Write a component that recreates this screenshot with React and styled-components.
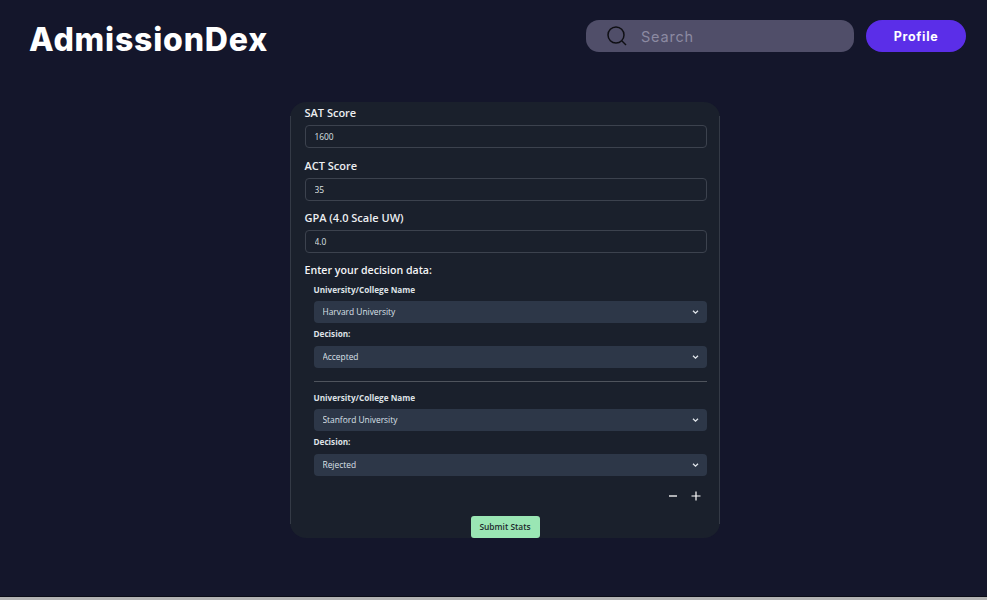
import React from "react";
import styled, { createGlobalStyle } from "styled-components";

const Global = createGlobalStyle`
  html, body { margin: 0; padding: 0; background: #14162b; }
  * { box-sizing: border-box; }
  #root { height: 600px; overflow: hidden; }
`;

const Page = styled.div`
  height: 600px;
  background: #14162b;
  border-bottom: 3px solid #b4b4b4;
  box-shadow: inset 0 -1px 0 #0b0c18;
  display: flex;
  flex-direction: column;
  font-family: "Open Sans", "Noto Sans", sans-serif;
`;

const Header = styled.header`
  display: flex;
  align-items: flex-start;
  justify-content: space-between;
  height: 72px;
  padding: 20px 21px 0 29px;
  flex: none;
`;

const Title = styled.h1`
  margin: 0;
  font-family: Inter, sans-serif;
  font-weight: 800;
  font-size: 32px;
  letter-spacing: 0.8px;
  color: #fff;
  line-height: 40px;
`;

const Actions = styled.div`
  display: flex;
  align-items: center;
  gap: 12px;
`;

const SearchBox = styled.div`
  width: 268px;
  height: 32px;
  border-radius: 13px;
  background: #504e69;
  display: flex;
  align-items: center;
  padding-left: 21px;
  gap: 14px;
`;

const SearchInput = styled.input`
  flex: 1;
  min-width: 0;
  border: 0;
  outline: 0;
  padding: 0;
  background: transparent;
  font-family: Inter, sans-serif;
  font-size: 14.5px;
  letter-spacing: 0.8px;
  color: #8c8aa2;
  &::placeholder { color: #8c8aa2; opacity: 1; }
`;

const ProfileButton = styled.button`
  width: 100px;
  height: 32px;
  border: 0;
  border-radius: 16px;
  background: #5b2ee8;
  color: #fff;
  font-family: Inter, sans-serif;
  font-weight: 700;
  font-size: 12.5px;
  letter-spacing: 0.7px;
`;

const Main = styled.main`
  display: flex;
  justify-content: center;
  padding-top: 30px;
  padding-left: 22px;
  flex: 1;
`;

const Card = styled.form`
  position: relative;
  width: 430px;
  height: 436px;
  background: #1a202c;
  border-radius: 16px;
  padding: 0 13px 0 15px;
  display: flex;
  flex-direction: column;
  &::before, &::after {
    content: "";
    position: absolute;
    top: 14px;
    bottom: 14px;
    width: 1px;
    background: #343a46;
  }
  &::before { left: 0; }
  &::after { right: 0; }
`;

const FieldLabel = styled.label`
  display: block;
  font-size: 11px;
  font-weight: 600;
  line-height: 19px;
  color: #eceef1;
  margin-bottom: 3px;
`;

const Field = styled.div`
  margin-bottom: 7.5px;
  margin-top: ${p => (p.$first ? "1px" : "0")};
`;

const TextInput = styled.input`
  display: block;
  width: 100%;
  height: 23px;
  border: 1px solid #3c424e;
  border-radius: 4px;
  background: #1a202c;
  padding: 0 9px;
  font-family: inherit;
  font-size: 8.4px;
  color: #dde0e5;
  outline: 0;
`;

const DecisionHeading = styled.div`
  font-size: 10.6px;
  font-weight: 600;
  line-height: 20px;
  color: #f4f5f7;
  margin-top: -1px;
`;

const Entries = styled.div`
  padding: 4px 0 0 9px;
`;

const Entry = styled.div`
  padding-bottom: ${p => (p.$last ? "0" : "13px")};
  border-bottom: ${p => (p.$last ? "0" : "1px solid #4f545d")};
  margin-bottom: ${p => (p.$last ? "0" : "10px")};
`;

const SmallLabel = styled.label`
  display: block;
  font-size: 8.2px;
  font-weight: 700;
  line-height: 12px;
  color: #dfe2e7;
  margin: ${p => (p.$second ? "5px 0 6px" : "0 0 5px")};
`;

const SelectWrap = styled.div`
  position: relative;
  height: 22px;
`;

const Select = styled.select`
  appearance: none;
  display: block;
  width: 100%;
  height: 22px;
  border: 0;
  border-radius: 4px;
  background: #2d3748;
  color: #dbe0e8;
  padding: 0 9px;
  font-family: inherit;
  font-size: 8.4px;
  outline: 0;
`;

const Chevron = styled.svg`
  position: absolute;
  right: 8px;
  top: 8px;
  width: 7px;
  height: 6px;
  pointer-events: none;
`;

const Controls = styled.div`
  display: flex;
  justify-content: flex-end;
  gap: 13px;
  padding: 14px 6px 0 0;
  height: 40px;
`;

const IconButton = styled.button`
  width: 10px;
  height: 12px;
  padding: 0;
  border: 0;
  background: transparent;
  display: flex;
  align-items: center;
  justify-content: center;
`;

const SubmitRow = styled.div`
  display: flex;
  padding-left: 166px;
`;

const SubmitButton = styled.button`
  width: 69px;
  height: 22px;
  border: 0;
  border-radius: 3px;
  background: #9ae6b4;
  color: #1d2a2c;
  font-family: inherit;
  font-size: 8.4px;
  font-weight: 600;
  padding: 0;
`;

function Dropdown({ value }) {
  return (
    <SelectWrap>
      <Select defaultValue={value}>
        <option>{value}</option>
      </Select>
      <Chevron viewBox="0 0 7 6" fill="none">
        <path d="M1 1.8 L3.5 4.2 L6 1.8" stroke="#e2e6ec" strokeWidth="1.3" />
      </Chevron>
    </SelectWrap>
  );
}

function DecisionEntry({ school, decision, last }) {
  return (
    <Entry $last={last}>
      <SmallLabel>University/College Name</SmallLabel>
      <Dropdown value={school} />
      <SmallLabel $second>Decision:</SmallLabel>
      <Dropdown value={decision} />
    </Entry>
  );
}

export default function App() {
  return (
    <Page>
      <Global />
      <Header>
        <Title>AdmissionDex</Title>
        <Actions>
          <SearchBox>
            <svg width="20" height="20" viewBox="0 0 20 20" fill="none" stroke="#0f0f14" strokeWidth="1.5">
              <circle cx="9" cy="9" r="8" />
              <path d="M15 15 L19 19" />
            </svg>
            <SearchInput placeholder="Search" />
          </SearchBox>
          <ProfileButton type="button">Profile</ProfileButton>
        </Actions>
      </Header>
      <Main>
        <Card>
          <Field $first>
            <FieldLabel>SAT Score</FieldLabel>
            <TextInput defaultValue="1600" />
          </Field>
          <Field>
            <FieldLabel>ACT Score</FieldLabel>
            <TextInput defaultValue="35" />
          </Field>
          <Field>
            <FieldLabel>GPA (4.0 Scale UW)</FieldLabel>
            <TextInput defaultValue="4.0" />
          </Field>
          <DecisionHeading>Enter your decision data:</DecisionHeading>
          <Entries>
            <DecisionEntry school="Harvard University" decision="Accepted" />
            <DecisionEntry school="Stanford University" decision="Rejected" last />
            <Controls>
              <IconButton type="button" aria-label="Remove">
                <svg width="10" height="10" viewBox="0 0 10 10"><path d="M1 5 H9" stroke="#fff" strokeWidth="1.3" /></svg>
              </IconButton>
              <IconButton type="button" aria-label="Add">
                <svg width="10" height="10" viewBox="0 0 10 10"><path d="M0.5 5 H9.5 M5 0.5 V9.5" stroke="#fff" strokeWidth="1.2" /></svg>
              </IconButton>
            </Controls>
          </Entries>
          <SubmitRow>
            <SubmitButton type="button">Submit Stats</SubmitButton>
          </SubmitRow>
        </Card>
      </Main>
    </Page>
  );
}
